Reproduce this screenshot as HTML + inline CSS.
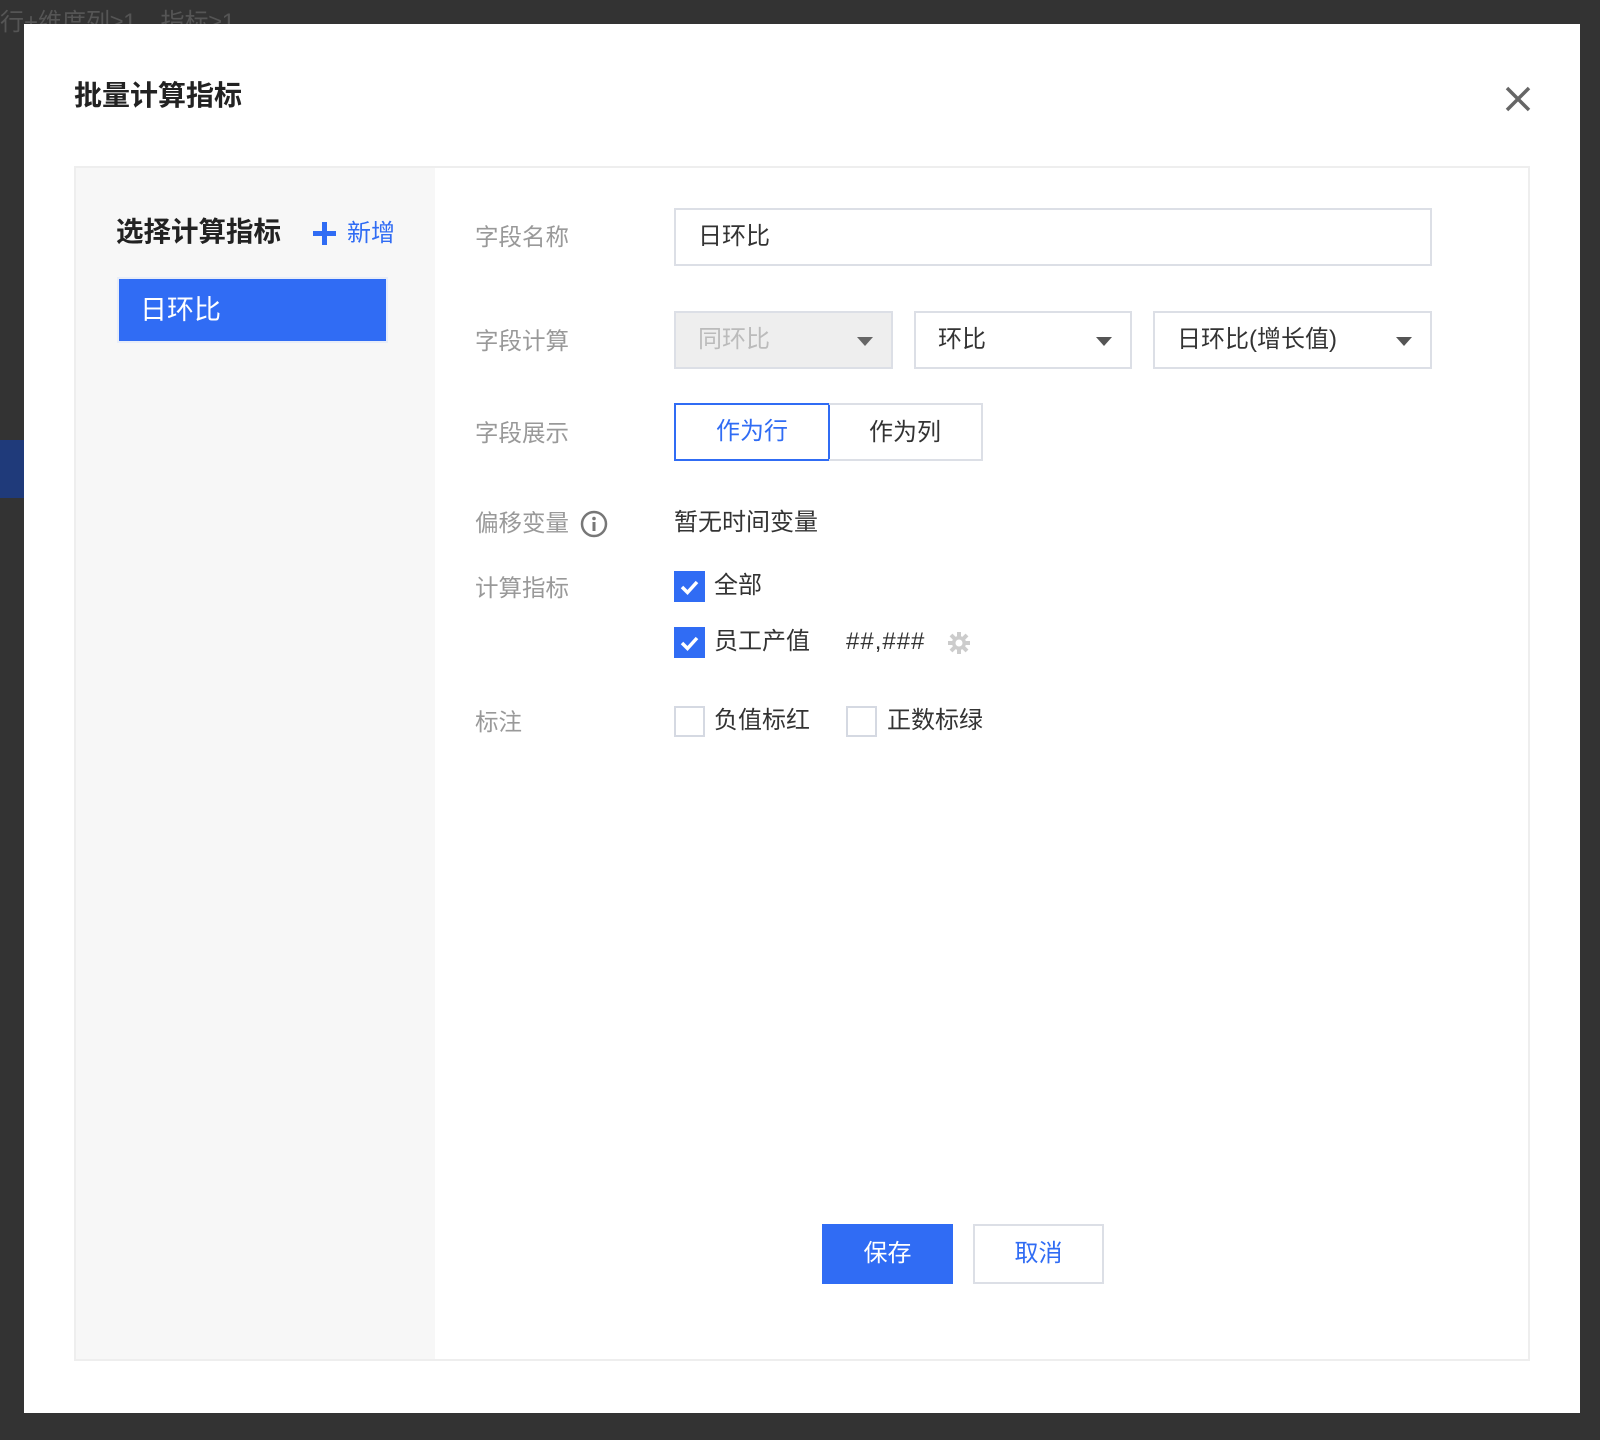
<!DOCTYPE html>
<html><head><meta charset="utf-8"><style>
*{box-sizing:border-box;margin:0;padding:0}
body{width:1600px;height:1440px;background:#333;position:relative;overflow:hidden;font-family:"Liberation Sans","Noto Sans CJK SC",sans-serif;color:#333}
.a{position:absolute}
.bgt{color:#555;font-size:24px}
.modal{left:24px;top:24px;width:1556px;height:1389px;background:#fff}
.lbl{color:#999;font-size:23.5px;left:475px;line-height:30px}
.box{border:2px solid #dcdfe6;background:#fff;font-size:24px;line-height:54px;padding-left:22px}
.arr{position:absolute;right:18px;top:24px;width:0;height:0;border-left:8px solid transparent;border-right:8px solid transparent;border-top:9px solid #555}
.cb{width:31px;height:31px;border:2px solid #d5d9e2;background:#fff}
.cb.on{background:#306cf4;border-color:#306cf4}
.t{font-size:24px;line-height:30px;color:#333}
</style></head><body>
<div class="a bgt" style="left:0;top:2px">行+维度列≥1、指标≥1</div>
<div class="a" style="left:0;top:440px;width:24px;height:58px;background:#1f3a7a"></div>
<div class="a modal">
</div>
<div class="a" style="left:74px;top:79px;font-size:28px;font-weight:bold;color:#222;line-height:34px">批量计算指标</div>
<svg class="a" style="left:1505px;top:86px" width="26" height="26"><path d="M2 2L24 24M24 2L2 24" stroke="#666" stroke-width="3.5"/></svg>
<div class="a" style="left:74px;top:166px;width:1456px;height:1195px;border:2px solid #eee"></div>
<div class="a" style="left:76px;top:168px;width:359px;height:1191px;background:#f7f7f7"></div>
<div class="a" style="left:116px;top:215px;font-size:27.5px;font-weight:bold;color:#222;line-height:34px">选择计算指标</div>
<svg class="a" style="left:312px;top:221px" width="25" height="25"><path d="M12.5 1V24M1 12.5H24" stroke="#306cf4" stroke-width="5"/></svg>
<div class="a" style="left:347px;top:219px;font-size:24px;color:#306cf4;line-height:30px">新增</div>
<div class="a" style="left:117px;top:277px;width:271px;height:66px;background:#306cf4;border:2px solid #e8edf8;color:#fff;font-size:27px;line-height:62px;padding-left:21px">日环比</div>

<div class="a lbl" style="top:222px">字段名称</div>
<div class="a box" style="left:674px;top:208px;width:758px;height:58px">日环比</div>

<div class="a lbl" style="top:326px">字段计算</div>
<div class="a box" style="left:674px;top:311px;width:219px;height:58px;background:#eee;color:#bbb">同环比<span class="arr" style="border-top-color:#666"></span></div>
<div class="a box" style="left:914px;top:311px;width:218px;height:58px">环比<span class="arr"></span></div>
<div class="a box" style="left:1153px;top:311px;width:279px;height:58px">日环比(增长值)<span class="arr"></span></div>

<div class="a lbl" style="top:418px">字段展示</div>
<div class="a" style="left:674px;top:403px;width:156px;height:58px;border:2px solid #306cf4;color:#306cf4;font-size:24px;line-height:54px;text-align:center">作为行</div>
<div class="a" style="left:829px;top:403px;width:154px;height:58px;border:2px solid #dcdfe6;border-left:none;font-size:24px;line-height:56px;text-align:center">作为列</div>

<div class="a lbl" style="top:508px">偏移变量</div>
<svg class="a" style="left:580px;top:510px" width="28" height="28"><circle cx="14" cy="14" r="12" fill="none" stroke="#777" stroke-width="2.5"/><circle cx="14" cy="8.5" r="1.8" fill="#777"/><path d="M14 12V21" stroke="#777" stroke-width="3"/></svg>
<div class="a t" style="left:674px;top:508px">暂无时间变量</div>

<div class="a lbl" style="top:573px">计算指标</div>
<div class="a cb on" style="left:674px;top:571px"><svg width="27" height="27"><path d="M6 14L11.5 19.5L21 9" fill="none" stroke="#fff" stroke-width="3.5"/></svg></div>
<div class="a t" style="left:714px;top:571px">全部</div>
<div class="a cb on" style="left:674px;top:627px"><svg width="27" height="27"><path d="M6 14L11.5 19.5L21 9" fill="none" stroke="#fff" stroke-width="3.5"/></svg></div>
<div class="a t" style="left:714px;top:627px">员工产值</div>
<div class="a t" style="left:846px;top:627px;letter-spacing:1px">##,###</div>
<svg class="a" style="left:946px;top:630px" width="26" height="26" viewBox="0 0 26 26"><g stroke="#ccc" stroke-width="4"><path d="M13 2V24M2 13H24M5 5L21 21M21 5L5 21"/></g><circle cx="13" cy="13" r="7" fill="#ccc"/><circle cx="13" cy="13" r="3.5" fill="#fff"/></svg>

<div class="a lbl" style="top:707px">标注</div>
<div class="a cb" style="left:674px;top:706px"></div>
<div class="a t" style="left:714px;top:706px">负值标红</div>
<div class="a cb" style="left:846px;top:706px"></div>
<div class="a t" style="left:887px;top:706px">正数标绿</div>

<div class="a" style="left:822px;top:1224px;width:131px;height:60px;background:#306cf4;color:#fff;font-size:24px;line-height:60px;text-align:center">保存</div>
<div class="a" style="left:973px;top:1224px;width:131px;height:60px;border:2px solid #dcdfe6;color:#306cf4;font-size:24px;line-height:56px;text-align:center">取消</div>
</body></html>
